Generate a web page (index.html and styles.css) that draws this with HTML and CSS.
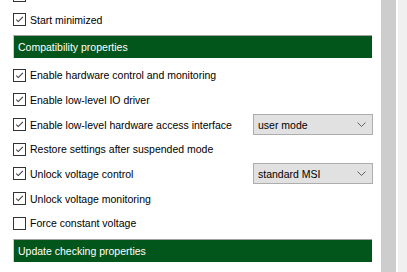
FILE: index.html
```html
<!DOCTYPE html>
<html lang="en">
<head>
    <meta charset="UTF-8">
    <title>Settings - Compatibility properties</title>
    <link rel="stylesheet" href="styles.css">
</head>
<body>
    <div class="window">
        <div class="content">
            <div class="group group-top">
                <!-- row above is scrolled out of view, only its box edge shows -->
                <div class="row"><span class="box checked"><svg viewBox="0 0 13 13"><polyline points="2.5,6.5 5,9 10.5,3.5"/></svg></span></div>
                <label class="row"><span class="box checked"><svg viewBox="0 0 13 13"><polyline points="2.5,6.5 5,9 10.5,3.5"/></svg></span>Start minimized</label>
            </div>

            <div class="section">Compatibility properties</div>

            <div class="group">
                <label class="row"><span class="box checked"><svg viewBox="0 0 13 13"><polyline points="2.5,6.5 5,9 10.5,3.5"/></svg></span>Enable hardware control and monitoring</label>
                <label class="row"><span class="box checked"><svg viewBox="0 0 13 13"><polyline points="2.5,6.5 5,9 10.5,3.5"/></svg></span>Enable low-level IO driver</label>
                <div class="row">
                    <span class="box checked"><svg viewBox="0 0 13 13"><polyline points="2.5,6.5 5,9 10.5,3.5"/></svg></span>
                    <span class="label">Enable low-level hardware access interface</span>
                    <div class="select">user mode<svg class="chevron" viewBox="0 0 9 5"><polyline points="0.5,0.5 4.5,4.5 8.5,0.5"/></svg></div>
                </div>
                <label class="row"><span class="box checked"><svg viewBox="0 0 13 13"><polyline points="2.5,6.5 5,9 10.5,3.5"/></svg></span>Restore settings after suspended mode</label>
                <div class="row">
                    <span class="box checked"><svg viewBox="0 0 13 13"><polyline points="2.5,6.5 5,9 10.5,3.5"/></svg></span>
                    <span class="label">Unlock voltage control</span>
                    <div class="select">standard MSI<svg class="chevron" viewBox="0 0 9 5"><polyline points="0.5,0.5 4.5,4.5 8.5,0.5"/></svg></div>
                </div>
                <label class="row"><span class="box checked"><svg viewBox="0 0 13 13"><polyline points="2.5,6.5 5,9 10.5,3.5"/></svg></span>Unlock voltage monitoring</label>
                <label class="row"><span class="box"></span>Force constant voltage</label>
            </div>

            <div class="section">Update checking properties</div>
        </div>
        <div class="scrollbar"></div>
        <div class="edge"></div>
    </div>
</body>
</html>
```

FILE: styles.css
```css
html, body {
    margin: 0;
    padding: 0;
    background-color: #ffffff;
    overflow: hidden;
}
body {
    font-family: 'Liberation Sans', Arial, sans-serif;
    font-size: 10.5px;
    color: #000000;
}
.window {
    display: flex;
    height: 272px;
}
.content {
    width: 359px;
    padding-left: 13px;
    padding-right: 9px;
}
.group {
    display: flex;
    flex-direction: column;
    padding-top: 5px;
    padding-bottom: 3.7px;
}
.group-top {
    margin-top: -17px;
    padding-top: 0;
    padding-bottom: 2.7px;
}
.row {
    display: flex;
    align-items: center;
    height: 24.67px;
}
.box {
    width: 11px;
    height: 11px;
    border: 1px solid #333333;
    background-color: #ffffff;
    margin-right: 4px;
    flex-shrink: 0;
}
.box svg {
    display: none;
    width: 11px;
    height: 11px;
}
.box.checked svg {
    display: block;
}
.box polyline {
    fill: none;
    stroke: #333333;
    stroke-width: 1.2;
}
.label {
    flex: 1;
}
.select {
    display: flex;
    align-items: center;
    justify-content: space-between;
    box-sizing: border-box;
    width: 120px;
    height: 21px;
    padding: 0 6px 0 4px;
    background-color: #e1e1e1;
    border: 1px solid #adadad;
    margin-right: -1px;
}
.chevron {
    width: 9px;
    height: 5px;
}
.chevron polyline {
    fill: none;
    stroke: #606060;
    stroke-width: 1;
}
.section {
    height: 22px;
    line-height: 22px;
    padding-left: 4px;
    background-color: #03561b;
    border-top: 1px solid #a0a0a0;
    border-left: 1px solid #c8d4c8;
    color: #ffffff;
}
.scrollbar {
    width: 15px;
    background-color: #cdcdcd;
}
.edge {
    width: 11px;
    background-color: #f0f0f0;
    border-left: 2px solid #ffffff;
    box-sizing: border-box;
}
```
